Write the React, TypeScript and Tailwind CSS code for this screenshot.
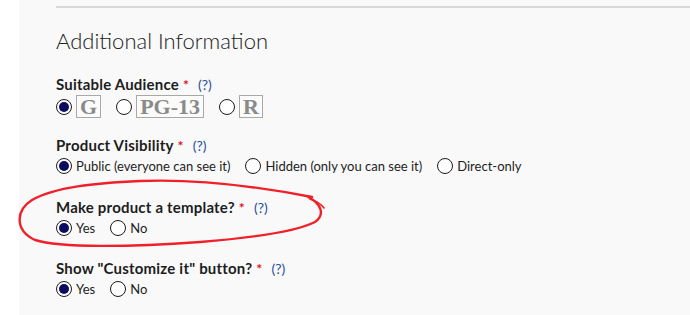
const Radio = ({ checked = false }: { checked?: boolean }) => (
  <span className="flex h-[16px] w-[16px] shrink-0 items-center justify-center rounded-full border-[1.5px] border-[#1a1a1a] bg-white">
    {checked && <span className="h-[10px] w-[10px] rounded-full bg-[#0c0c5e]" />}
  </span>
);

const Label = ({ text }: { text: string }) => (
  <div className="flex items-baseline text-[15px] font-bold leading-none tracking-[0.2px] text-[#1d1d1d]">
    <span>{text}</span>
    <span className="ml-[4px] text-[14px] text-[#e0151b]">*</span>
    <span className="ml-[9px] text-[14px] font-normal tracking-normal text-[#1f4e9c]">(?)</span>
  </div>
);

const Option = ({ label, checked = false }: { label: string; checked?: boolean }) => (
  <label className="mr-[15px] flex items-center">
    <Radio checked={checked} />
    <span className="ml-[4px] text-[13px] leading-none text-[#1d1d1d]">{label}</span>
  </label>
);

const Rating = ({ label, checked = false }: { label: string; checked?: boolean }) => (
  <label className="mr-[15px] flex items-center">
    <Radio checked={checked} />
    <span className="ml-[4px] flex h-[23px] items-center border border-[#a8a8a8] bg-[#fbfbfb] px-[3px] font-['Liberation_Serif',serif] text-[22px] font-bold leading-none text-[#8a8a8a]">
      {label}
    </span>
  </label>
);

export default function App() {
  return (
    <div className="relative flex h-[315px] w-[690px] overflow-hidden bg-white font-['Lato',sans-serif]">
      <div className="w-[19px] shrink-0 bg-white" />
      <div className="flex-1 bg-[#f9f9f9] pl-[37px]">
        <div className="mt-[6px] h-[2px] bg-[#d9d9d9]" />
        <h2 className="mt-[22px] text-[22px] font-light leading-none text-[#222]">Additional Information</h2>

        <div className="mt-[25px]">
          <Label text="Suitable Audience" />
          <div className="mt-[3px] flex items-center">
            <Rating label="G" checked />
            <Rating label="PG-13" />
            <Rating label="R" />
          </div>
        </div>

        <div className="mt-[20px]">
          <Label text="Product Visibility" />
          <div className="mt-[5px] flex items-center">
            <Option label="Public (everyone can see it)" checked />
            <Option label="Hidden (only you can see it)" />
            <Option label="Direct-only" />
          </div>
        </div>

        <div className="mt-[26px]">
          <Label text="Make product a template?" />
          <div className="mt-[5px] flex items-center">
            <Option label="Yes" checked />
            <Option label="No" />
          </div>
        </div>

        <div className="mt-[25px]">
          <Label text='Show "Customize it" button?' />
          <div className="mt-[5px] flex items-center">
            <Option label="Yes" checked />
            <Option label="No" />
          </div>
        </div>
      </div>

      <svg className="pointer-events-none absolute left-0 top-0" width="690" height="315" viewBox="0 0 690 315">
        <path
          d="M312 197 C 250 185, 190 179, 140 181 C 95 183, 55 187, 32 200 C 16 210, 14 230, 35 240 C 60 248, 130 247, 200 242 C 250 238, 295 232, 315 222 C 325 215, 322 204, 308 197"
          fill="none"
          stroke="#f0202a"
          strokeWidth="2.4"
          strokeLinecap="round"
        />
        <path d="M310 199 C 316 201, 321 204, 324 208" fill="none" stroke="#f0202a" strokeWidth="1.6" strokeLinecap="round" />
      </svg>
    </div>
  );
}
